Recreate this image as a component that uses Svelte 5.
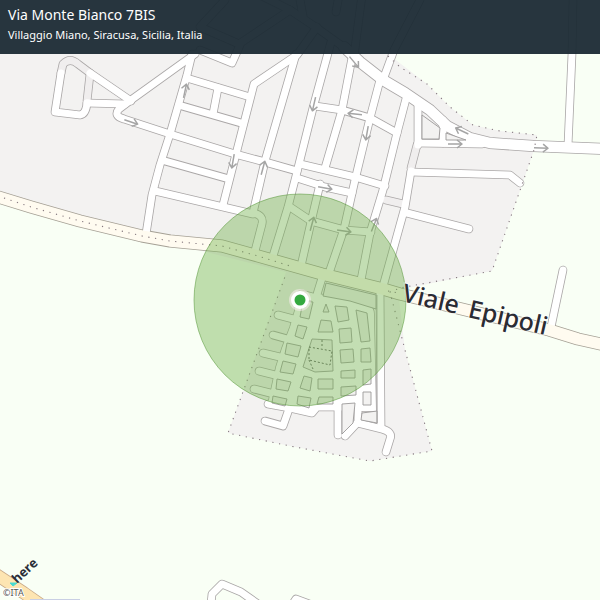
<script>
  const settlement =
    'M0 0H374L388 54L427 84L450 107L473 125L500 131L537 135L534 150L492 271L398 290L405 350L432 451L370 461L290 446L228 433L286 272L142 236L31 207L0 197Z';
  const boundary =
    'M388 56L400 67L427 84L450 107L473 125L500 131L537 135L534 150L492 271L400 288L390 292L405 350L432 451L370 461L290 446L228 433L286 274';
  const mainRoad =
    'M-5 196L31 207L80 221L142 236L170 241L222 246L258 256L322 274L383 289L400 294L470 311L549 330L578 339L605 345';

  const roads = [
    'M90 73L131 101',
    'M61 73L55 112L80 115Q86 114 87 103',
    'M87 103L125 104',
    'M195 54L131 100L119 109Q113 116 124 119L170 134L235 154L265 162L297 171',
    'M192 54L187 75L170 134L160 165L152 195L146 234',
    'M317 27L297 55L254 84L236 154L223 205',
    'M296 54L265 161L253 213Q264 215 262 224L255 251',
    'M331 42L313 108L297 172L288 207L273 256',
    'M352 58L342 110L325 168',
    'M320 184L311 222L301 266',
    'M380 80L370 118L355 180L344 229L329 273',
    'M407 95L397 133L383 190L370 233L361 280',
    'M418 102L418 145',
    'M411 171L405 207L382 290',
    'M190 79L250 97',
    'M182 106L241 123',
    'M218 88L213 114',
    'M165 161L229 179',
    'M155 191L253 214',
    'M315 106L342 110L370 118L397 133',
    'M300 164L355 177L385 186',
    'M297 178L325 187L352 193',
    'M290 207L311 221L344 230L371 232',
    'M411 172L510 175L520 183',
    'M407 213L469 229',
    'M563 270L551 327',
    'M573 0L572 54L568 145',
    'M420 0L394 50L383 80',
    'M443 120L443 143',
    'M418 143L482 144',
    'M200 50L232 63L240 45',
    'M225 0L200 27L239 44L290 10',
    'M260 -5L290 10L317 28L345 48',
    'M300 0L303 16M339 -5L336 12M362 -5L354 56',
    'M211 604L212 594L222 584L241 592L258 604',
    'M292 605L296 599L312 605',
    'M322 278L314 304',
    'M316 298L301 294L298 308',
    'M278 315L297 320',
    'M273 335L291 340',
    'M263 353L284 358',
    'M259 371L279 376',
    'M254 389L274 394',
    'M268 404L290 408L312 413L317 407L345 407',
    'M265 421L283 426L289 409',
    'M338 400L338 435',
    'M345 436L358 422L358 404',
    'M358 423L382 429Q393 432 390 439L386 452',
    'M380 290L381 428'
  ];

  const wideRoad =
    'M344 47L360 62L383 80L405 93L430 110L447 126L470 138L490 143L533 146L605 149';
  const paleRoads = ['M61 73L63 64Q70 57 78 64L90 73', 'M90 74L87 101', 'M417 145L411 168', 'M386 200L403 204'];

  const villageStreets =
    'M319 294L350 300L370 306Q374 308 374 314L376 411H356V408H317L312 413L268 404L276 367L282 348L290 327L295 310L311 302Z';

  const blocks = [
    '422,115 440,128 439,139 422,139',
    '446,133 466,140 446,140',
    '326,283 376,295 376,309 350,301 323,296',
    '303,301 313,302 309,319 300,317',
    '298,325 307,327 303,339 295,336',
    '287,343 301,346 298,357 285,354',
    '283,361 296,364 293,374 280,372',
    '277,379 291,382 288,391 276,389',
    '273,396 287,399 285,406 272,403',
    '326,304 329,312 323,312',
    '321,320 331,321 333,332 318,332',
    '312,339 332,340 333,371 315,372 303,367',
    '304,376 312,378 310,391 300,388',
    '298,396 311,398 309,408 297,404',
    '335,306 347,307 349,320 338,322',
    '339,329 351,328 352,342 340,343',
    '340,350 353,349 354,362 341,363',
    '341,371 355,370 355,378 341,378',
    '341,387 356,386 356,395 341,396',
    '318,379 333,379 333,389 318,389',
    '319,397 333,397 333,404 317,404',
    '356,310 367,313 370,341 361,342',
    '361,349 370,348 371,362 361,362',
    '363,370 371,369 371,384 363,385',
    '363,392 371,392 371,405 363,405',
    '342,404 355,403 353,423 342,434',
    '362,413 377,411 377,423 361,420'
  ];

  const arrows = [
    [185, 91, -78], [131, 122, 18], [354, 62, 50], [314, 104, 103], [355, 114, 186],
    [367, 133, 100], [233, 161, 100], [263, 168, -75], [325, 188, 10], [312, 224, -75],
    [344, 231, 8], [374, 225, -68], [462, 131, 205], [455, 144, 0], [541, 148, 2]
  ];
</script>

<main class="card">
  <svg class="map" viewBox="0 0 600 600" role="img" aria-label="Map of Via Monte Bianco 7BIS">
    <rect class="land" width="600" height="600" />
    <path class="settlement" d={settlement} />

    {#each paleRoads as d}<path class="casing" {d} />{/each}
    {#each roads as d}<path class="casing" {d} />{/each}
    <path class="casing wide" d={wideRoad} />
    <path class="casing main" d={mainRoad} />
    <path class="village" d={villageStreets} />
    {#each paleRoads as d}<path class="road pale" {d} />{/each}
    {#each roads as d}<path class="road" {d} />{/each}
    <path class="road wide" d={wideRoad} />
    <path class="road main" d={mainRoad} />
    <path class="streets" d={villageStreets} />

    {#each blocks as points}<polygon class="block" {points} />{/each}
    <path class="edge" d="M377 295V423" />
    <path class="park" d="M309 347L332 351L330 365L309 360ZM322 340V348M309 360L313 369" />

    <path class="boundary" d={boundary} />
    <path class="boundary" d="M4 198L31 207L80 221L142 236L170 241L222 246L258 256L290 266M388 291L398 293" />

    {#each arrows as [x, y, angle]}
      <path class="arrow" d="M-7 0H7M2 -4L7 0L2 4" transform="translate({x} {y}) rotate({angle})" />
    {/each}

    <path class="highway-casing" d="M-6 573L24 593L44 607" />
    <path class="highway" d="M-6 573L24 593L44 607" />
    <path class="water" d="M30 600H80" />

    <circle class="area" cx="300" cy="300" r="106" />
    <circle class="halo" cx="300" cy="300" r="11" />
    <circle class="ring" cx="300" cy="300" r="9" />
    <circle class="dot" cx="300" cy="300" r="5.5" />

    <text class="street" transform="translate(401 301) rotate(13)">Viale</text>
    <text class="street" transform="translate(467 317) rotate(13)">Epipoli</text>

    <path class="logo-mark" d="M10 583H17L13 586Z" />
    <text class="logo" transform="translate(17 584) rotate(-43)">here</text>
    <text class="credit" x="3" y="596">©ITA</text>
  </svg>

  <header class="banner">
    <h1>Via Monte Bianco 7BIS</h1>
    <p>Villaggio Miano, Siracusa, Sicilia, Italia</p>
  </header>
</main>

<style>
  :global(body) { margin: 0; }
  .card {
    position: relative;
    width: 100%;
    overflow: hidden;
    font-family: "Noto Sans", "Open Sans", sans-serif;
  }
  .map { display: block; width: 100%; height: auto; }
  .banner {
    position: absolute;
    top: 0;
    left: 0;
    right: 0;
    box-sizing: border-box;
    padding: 5px 8px 11px;
    background: rgba(27, 42, 52, 0.95);
    color: #fff;
  }
  h1 { margin: 0; font-size: 14px; line-height: 20px; font-weight: 400; }
  p { margin: 2px 0 0; font-size: 11px; line-height: 16px; }

  .land { fill: #f9fff5; }
  .settlement { fill: #f3f2f1; }
  .casing, .road, .highway, .highway-casing, .boundary, .arrow, .edge, .park, .water {
    fill: none;
    stroke-linejoin: round;
  }
  .casing { stroke: #aaa7a7; stroke-width: 8.6; stroke-linecap: round; }
  .road { stroke: #fff; stroke-width: 7; stroke-linecap: round; }
  .road.pale { stroke: #f0eeee; }
  .casing.wide { stroke-width: 12; }
  .road.wide { stroke-width: 10.4; }
  .casing.main { stroke: #a5a095; stroke-width: 13; }
  .road.main { stroke: #fffbf0; stroke-width: 11.4; }
  .village { fill: #fff; stroke: #aaa7a7; stroke-width: 1.4; }
  .streets { fill: #fff; }
  .block { fill: #f3f2f1; stroke: #9b9898; stroke-width: 0.9; }
  .edge { stroke: #aaa7a7; stroke-width: 0.8; }
  .park { stroke: #555; stroke-width: 0.9; stroke-dasharray: 2 2; }
  .boundary { stroke: #85787f; stroke-width: 1.1; stroke-dasharray: 1.2 5.6; }
  .arrow { stroke: #a5a5a5; stroke-width: 1.5; }
  .highway-casing { stroke: #c9a987; stroke-width: 13; }
  .highway { stroke: #fde5b2; stroke-width: 11.4; }
  .water { stroke: #c9cfe4; stroke-width: 2; }
  .area { fill: rgba(112, 176, 74, 0.42); stroke: rgba(80, 145, 50, 0.5); stroke-width: 1; }
  .halo { fill: rgba(255, 240, 245, 0.5); }
  .ring { fill: #fff; }
  .dot { fill: #34a93f; }
  .street {
    font-size: 25px;
    font-weight: 500;
    fill: #2b2b33;
    stroke: #fff;
    stroke-width: 2;
    stroke-opacity: 0.6;
    paint-order: stroke;
  }
  .logo { font-size: 13px; font-weight: 700; fill: #2b2f38; }
  .logo-mark { fill: #48dad0; stroke: #48dad0; stroke-width: 1; }
  .credit { font-size: 9px; fill: #555; stroke: #fff; stroke-width: 2; paint-order: stroke; }
</style>
